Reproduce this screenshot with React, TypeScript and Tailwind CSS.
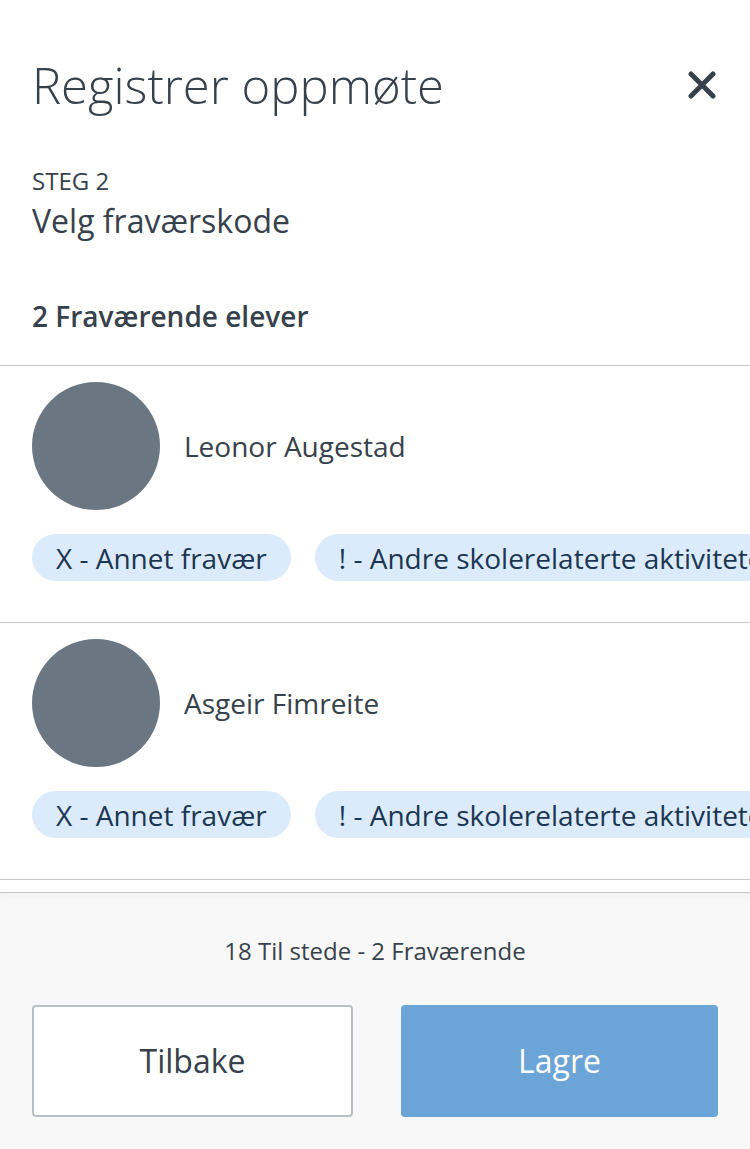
import React from "react";

const students = [
  { name: "Leonor Augestad" },
  { name: "Asgeir Fimreite" },
];

const codes = ["X - Annet fravær", "! - Andre skolerelaterte aktiviteter"];

function CloseIcon() {
  return (
    <svg width="28" height="28" viewBox="0 0 28 28" fill="none">
      <path
        d="M3 3L25 25M25 3L3 25"
        stroke="#37414b"
        strokeWidth="5"
        strokeLinecap="round"
      />
    </svg>
  );
}

function StudentRow({ name }: { name: string }) {
  return (
    <div className="border-b border-[#c4c8cc] pt-4 pb-[41px]">
      <div className="flex items-center gap-6 px-8">
        <div className="w-[128px] h-[128px] rounded-full bg-[#6a7682] shrink-0"></div>
        <span className="text-[28px] leading-[36px] text-[#37414b]">{name}</span>
      </div>
      <div className="flex gap-[24px] pl-8 mt-6 overflow-hidden whitespace-nowrap">
        {codes.map((code, index) => (
          <span
            key={index}
            className="h-[47px] px-6 flex items-center rounded-full bg-[#dcebfb] text-[28px] text-[#1b3653] shrink-0"
          >
            {code}
          </span>
        ))}
      </div>
    </div>
  );
}

export default function App() {
  return (
    <div
      className="w-[750px] h-[1149px] bg-white flex flex-col overflow-hidden"
      style={{ fontFamily: '"Open Sans", "Noto Sans", sans-serif' }}
    >
      <div className="flex-1">
        <div className="flex items-center justify-between px-8 pt-[54px]">
          <h1 className="text-[49px] font-light text-[#37414b] leading-[62px]">
            Registrer oppmøte
          </h1>
          <div className="mr-[2px]">
            <CloseIcon />
          </div>
        </div>

        <div className="px-8 mt-[50px] text-[#37414b]">
          <div className="text-[24px] leading-[30px] uppercase">Steg 2</div>
          <div className="text-[32px] leading-[40px] mt-[5px]">Velg fraværskode</div>
        </div>

        <div className="px-8 mt-[57px] pb-[31px] border-b border-[#c4c8cc]">
          <span className="text-[28px] font-semibold text-[#37414b] leading-[36px]">
            2 Fraværende elever
          </span>
        </div>

        {students.map((student, index) => (
          <StudentRow key={index} name={student.name} />
        ))}
      </div>

      <div className="bg-[#f8f8f8] border-t border-[#c4c8cc] shadow-[inset_0_6px_8px_-6px_rgba(0,0,0,0.06)] px-8 pb-8">
        <div className="text-center text-[24px] text-[#37414b] pt-[43px] pb-[39px] leading-[30px]">
          18 Til stede - 2 Fraværende
        </div>
        <div className="flex gap-12">
          <button className="flex-1 h-[112px] bg-white border-2 border-[#b9bfc5] rounded-[4px] text-[32px] text-[#37414b]">
            Tilbake
          </button>
          <button className="flex-1 h-[112px] bg-[#6ba5d7] rounded-[4px] text-[32px] text-white">
            Lagre
          </button>
        </div>
      </div>
    </div>
  );
}
